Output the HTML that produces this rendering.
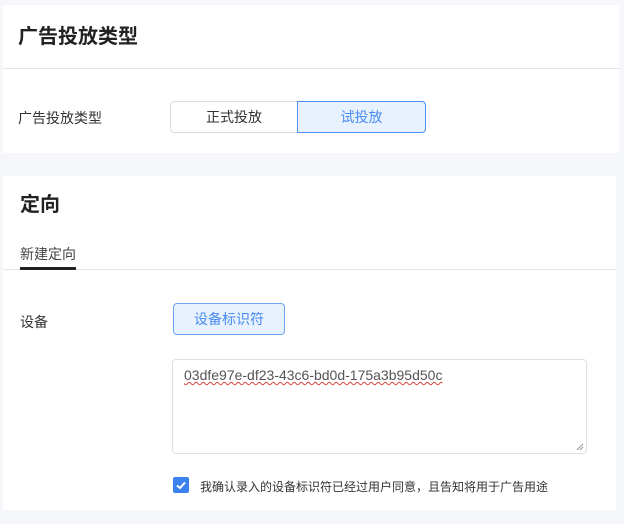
<!DOCTYPE html>
<html><head><meta charset="utf-8"><style>
*{margin:0;padding:0;box-sizing:border-box}
body{width:624px;height:524px;background:#f5f7fa;font-family:"Liberation Sans","Noto Sans CJK SC",sans-serif;position:relative;overflow:hidden;color:#333}
.card{position:absolute;background:#fff}
.abs{position:absolute}
</style></head><body>
<div class="card" style="left:3px;top:5px;width:616px;height:148px">
  <div class="abs" style="left:15px;top:15px;font-size:20px;font-weight:bold;color:#222">广告投放类型</div>
  <div class="abs" style="left:0;top:63px;width:616px;height:1px;background:#e5e5e5"></div>
  <div class="abs" style="left:15px;top:103px;font-size:14px;color:#333">广告投放类型</div>
  <div class="abs" style="left:167px;top:96px;width:128px;height:32px;border:1px solid #dcdcdc;border-radius:4px 0 0 4px;font-size:14px;text-align:center;line-height:30px;color:#333">正式投放</div>
  <div class="abs" style="left:294px;top:96px;width:129px;height:32px;border:1px solid #4a90f0;border-radius:0 4px 4px 0;background:#e8f1fe;font-size:14px;text-align:center;line-height:30px;color:#4a8cf0">试投放</div>
</div>
<div class="card" style="left:3px;top:176px;width:613px;height:334px">
  <div class="abs" style="left:17px;top:12px;font-size:20px;font-weight:bold;color:#222">定向</div>
  <div class="abs" style="left:17px;top:68px;font-size:14px;color:#444">新建定向</div>
  <div class="abs" style="left:0;top:93px;width:613px;height:1px;background:#e5e5e5"></div>
  <div class="abs" style="left:17px;top:91px;width:56px;height:3px;background:#222"></div>
  <div class="abs" style="left:17px;top:136px;font-size:14px;color:#333">设备</div>
  <div class="abs" style="left:170px;top:127px;width:112px;height:32px;border:1px solid #6aa4f4;border-radius:4px;background:#e8f1fe;font-size:14px;text-align:center;line-height:30px;color:#4a8cf0">设备标识符</div>
  <div class="abs" style="left:169px;top:183px;width:415px;height:95px;border:1px solid #e0e0e0;border-radius:4px">
    <div class="abs" style="left:11px;top:7px;font-size:14px;color:#555;text-decoration:underline wavy #e04040;text-decoration-thickness:1px">03dfe97e-df23-43c6-bd0d-175a3b95d50c</div>
    <svg class="abs" style="right:2px;bottom:2px" width="8" height="8"><path d="M1 7L7 1M4 7L7 4" stroke="#999" stroke-width="1"/></svg>
  </div>
  <div class="abs" style="left:170px;top:301px;width:16px;height:16px;background:#3b82f0;border-radius:2px">
    <svg width="16" height="16"><path d="M4 8.5L7 11L12 5.5" stroke="#fff" stroke-width="2" fill="none"/></svg>
  </div>
  <div class="abs" style="left:197px;top:302px;font-size:12px;color:#333">我确认录入的设备标识符已经过用户同意，且告知将用于广告用途</div>
</div>
</body></html>
